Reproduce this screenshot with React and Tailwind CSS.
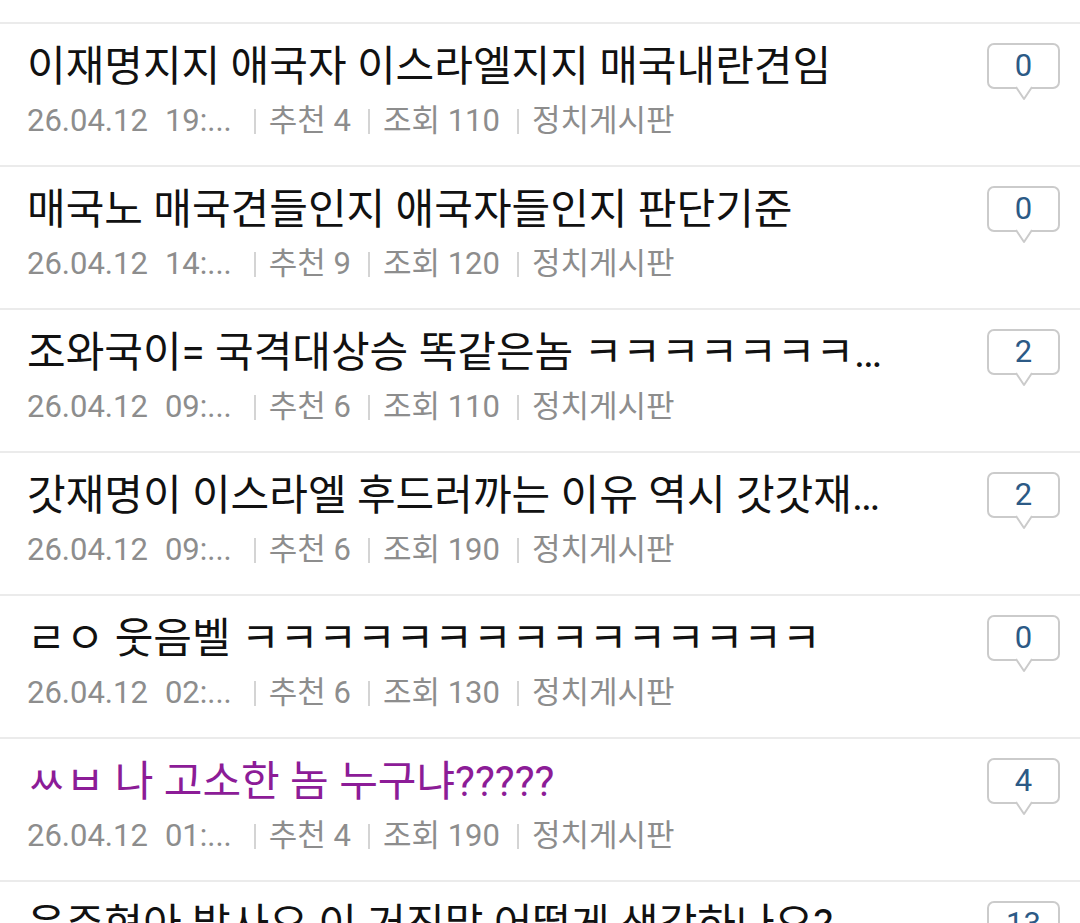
import React from "react";

const posts = [
  { title: "이재명지지 애국자 이스라엘지지 매국내란견임", time: "19:...", up: 4, views: 110, comments: 0 },
  { title: "매국노 매국견들인지 애국자들인지 판단기준", time: "14:...", up: 9, views: 120, comments: 0 },
  { title: "조와국이= 국격대상승 똑같은놈 ㅋㅋㅋㅋㅋㅋㅋㅋㅋㅋㅋㅋ", time: "09:...", up: 6, views: 110, comments: 2 },
  { title: "갓재명이 이스라엘 후드러까는 이유 역시 갓갓재명 ㅋㅋㅋ", time: "09:...", up: 6, views: 190, comments: 2 },
  { title: "ㄹㅇ 웃음벨 ㅋㅋㅋㅋㅋㅋㅋㅋㅋㅋㅋㅋㅋㅋㅋ", time: "02:...", up: 6, views: 130, comments: 0 },
  { title: "ㅆㅂ 나 고소한 놈 누구냐?????", time: "01:...", up: 4, views: 190, comments: 4, visited: true },
  { title: "윤주현아 발사요 이 거짓말 어떻게 생각하나요?", time: "00:...", up: 3, views: 210, comments: 13 },
];

const Sep = ({ wide }) => (
  <span className={`inline-block w-[2px] h-[25px] bg-[#d4d4d4] ${wide ? "ml-[22px]" : "ml-[17px]"} mr-[13px]`} />
);

const CommentBox = ({ count }) => (
  <div className="relative w-[73px] h-[46px] mt-[19px] shrink-0">
    <div className="w-full h-full border-2 border-[#cbcbcb] rounded-[7px] bg-white flex items-center justify-center text-[31px] text-[#2c5a86]">
      {count}
    </div>
    <svg className="absolute left-[28px] top-[42px]" width="18" height="16" viewBox="0 0 18 16">
      <path d="M1 2 L9 14 L17 2" fill="white" stroke="#cbcbcb" strokeWidth="2" strokeLinejoin="round" />
      <rect x="3" y="0" width="12" height="3" fill="white" />
    </svg>
  </div>
);

const App = () => {
  return (
    <div className="w-[1080px] h-[923px] overflow-hidden bg-white" style={{ fontFamily: 'Roboto, "Noto Sans CJK KR", sans-serif' }}>
      <div className="h-[22px]" />
      {posts.map((post, i) => (
        <div key={i} className="flex border-t-2 border-[#ebebeb] pl-[27px] pr-[20px] h-[143px]">
          <div className="flex-1 min-w-0 pt-[20px] mr-[95px]">
            <div className={`h-[46px] leading-[46px] text-[42px] truncate ${post.visited ? "text-[#8c1c97]" : "text-[#111111]"}`}>
              {post.title}
            </div>
            <div className="mt-[11px] h-[40px] flex items-center text-[31px] text-[#8d8d8d] whitespace-nowrap">
              <span>26.04.12</span>
              <span className="ml-[17px]">{post.time}</span>
              <Sep wide />
              <span>추천 {post.up}</span>
              <Sep />
              <span>조회 {post.views}</span>
              <Sep />
              <span>정치게시판</span>
            </div>
          </div>
          <CommentBox count={post.comments} />
        </div>
      ))}
    </div>
  );
};

export default App;
